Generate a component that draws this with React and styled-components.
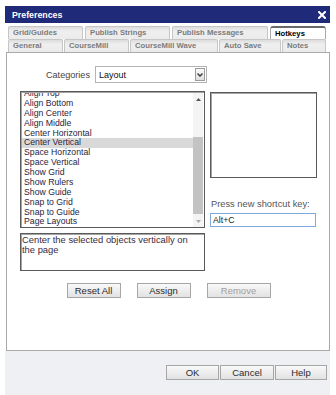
import React from "react";
import styled, { createGlobalStyle, css } from "styled-components";

const Global = createGlobalStyle`
  html, body { margin: 0; padding: 0; background: #fff; }
  body { font-family: "Liberation Sans", Arial, sans-serif; }
`;

const Window = styled.div`
  margin: 6px 0 0 5px;
  width: 325px;
  display: flex;
  flex-direction: column;
`;

const TitleBar = styled.div`
  height: 17px;
  box-sizing: border-box;
  background: #1f2a79;
  display: flex;
  align-items: center;
  justify-content: space-between;
  padding: 0 4px 0 7px;
  color: #fff;
  font-weight: bold;
  font-size: 8.8px;
`;

const TabStrip = styled.div`
  display: flex;
  flex-direction: column;
  padding: 3px 0 0 3px;
  background: #fff;
`;

const TabRow = styled.div`
  display: flex;
  gap: ${(p) => p.$gap}px;
  height: 13px;
`;

const Tab = styled.div`
  width: ${(p) => p.$w}px;
  height: 13px;
  box-sizing: border-box;
  border: 1px solid #c6c6c6;
  border-bottom: none;
  border-radius: 2px 2px 0 0;
  background: linear-gradient(#dcdcdc, #efefef 35%, #ebebeb);
  font-weight: bold;
  font-size: 7.7px;
  line-height: 12px;
  color: #7b7b7b;
  padding-left: 4px;
  white-space: nowrap;
  ${(p) =>
    p.$active &&
    css`
      background: #fff;
      color: #000;
      border-color: #a8a8a8;
      border-top: 2px solid #6a6a6a;
      border-radius: 3px 3px 0 0;
      line-height: 11px;
    `}
`;

const Panel = styled.div`
  margin-left: 1px;
  width: 324px;
  height: 299px;
  box-sizing: border-box;
  border: 1px solid #a9a9a9;
  background: #fff;
  display: flex;
  flex-direction: column;
  color: #333;
`;

const CategoryRow = styled.div`
  display: flex;
  align-items: center;
  margin-top: 13px;
  padding-left: 39px;
  gap: 5px;
  height: 17px;
`;

const Label = styled.span`
  font-size: ${(p) => p.$size || 9.1}px;
  color: #444;
`;

const Select = styled.div`
  width: 112px;
  height: 17px;
  box-sizing: border-box;
  border: 1px solid #b4b4b4;
  display: flex;
  align-items: center;
  justify-content: space-between;
  padding: 0 1px 0 3px;
  font-size: 9px;
  color: #111;
`;

const DropBtn = styled.div`
  width: 10px;
  height: 13px;
  box-sizing: border-box;
  border: 1px solid #9c9c9c;
  background: linear-gradient(#fafafa, #dedede);
  display: flex;
  align-items: center;
  justify-content: center;
`;

const Main = styled.div`
  display: flex;
  margin-top: 8px;
  padding-left: 13px;
  gap: 5px;
`;

const LeftCol = styled.div`
  width: 185px;
  display: flex;
  flex-direction: column;
  gap: 5px;
`;

const RightCol = styled.div`
  width: 107px;
  display: flex;
  flex-direction: column;
  padding-top: 1px;
`;

const ListBox = styled.div`
  height: 137px;
  box-sizing: border-box;
  border: 1px solid #5a5a5a;
  box-shadow: inset 1px 1px 0 #a4a4a4;
  display: flex;
  padding: 1px 1px 0 1px;
`;

const Items = styled.div`
  flex: 1;
  overflow: hidden;
`;

const ItemsInner = styled.div`
  margin-top: -4px;
`;

const Item = styled.div`
  height: 9.88px;
  line-height: 9.88px;
  font-size: 8.7px;
  padding-left: 2px;
  color: #2a2540;
  white-space: nowrap;
  ${(p) => p.$sel && css`background: #d9d9d9;`}
`;

const ScrollBar = styled.div`
  width: 10px;
  display: flex;
  flex-direction: column;
  background: #f4f4f4;
`;

const ScrollArrow = styled.div`
  height: 12px;
  display: flex;
  align-items: center;
  justify-content: center;
`;

const Track = styled.div`
  flex: 1;
  display: flex;
  flex-direction: column;
`;

const Thumb = styled.div`
  height: 77px;
  background: #c3c3c3;
`;

const DescBox = styled.div`
  height: 38px;
  box-sizing: border-box;
  border: 1px solid #5a5a5a;
  box-shadow: inset 1px 1px 0 #a4a4a4;
  padding: 1px 6px 0 1px;
  font-size: 9.4px;
  line-height: 10px;
  color: #3a2a40;
`;

const PreviewBox = styled.div`
  height: 86px;
  box-sizing: border-box;
  border: 1px solid #5a5a5a;
  box-shadow: inset 1px 1px 0 #a4a4a4;
`;

const KeyLabel = styled.div`
  margin-top: 21px;
  font-size: 9.3px;
  line-height: 10px;
  color: #555;
  padding-left: 1px;
  white-space: nowrap;
`;

const KeyInput = styled.div`
  margin-top: 4px;
  width: 106px;
  height: 14px;
  box-sizing: border-box;
  border: 1px solid #82a9df;
  font-size: 8.7px;
  line-height: 12px;
  padding-left: 2px;
  color: #222;
`;

const ButtonRow = styled.div`
  display: flex;
  justify-content: center;
  gap: 16px;
  margin-top: 12px;
  padding-left: 1px;
`;

const Button = styled.div`
  width: ${(p) => p.$w}px;
  height: 15px;
  box-sizing: border-box;
  border: 1px solid #a6a6a6;
  background: linear-gradient(#f9f9f9, #e2e2e2);
  display: flex;
  align-items: center;
  justify-content: center;
  font-size: 9.5px;
  color: ${(p) => (p.$disabled ? "#a0a0a0" : "#2a2a2a")};
`;

const Footer = styled.div`
  height: 36px;
  background: #eff0f4;
  border-bottom: 2px solid #7d7d7d;
  display: flex;
  justify-content: flex-end;
  align-items: flex-start;
  gap: 1px;
  padding: 14px 3px 0 0;
`;

const rowOne = [
  { t: "Grid/Guides", w: 75 },
  { t: "Publish Strings", w: 85 },
  { t: "Publish Messages", w: 96 },
  { t: "Hotkeys", w: 56, a: true },
];
const rowTwo = [
  { t: "General", w: 55 },
  { t: "CourseMill", w: 65 },
  { t: "CourseMill Wave", w: 88 },
  { t: "Auto Save", w: 62 },
  { t: "Notes", w: 44 },
];
const items = [
  "Align Top",
  "Align Bottom",
  "Align Center",
  "Align Middle",
  "Center Horizontal",
  "Center Vertical",
  "Space Horizontal",
  "Space Vertical",
  "Show Grid",
  "Show Rulers",
  "Show Guide",
  "Snap to Grid",
  "Snap to Guide",
  "Page Layouts",
];

export default function App() {
  const thumbOffset = 32;
  return (
    <>
      <Global />
      <Window>
        <TitleBar>
          <span>Preferences</span>
          <svg width="8" height="8" viewBox="0 0 8 8">
            <path d="M1 1L7 7M7 1L1 7" stroke="#fff" strokeWidth="2" strokeLinecap="square" />
          </svg>
        </TitleBar>
        <TabStrip>
          <TabRow $gap={2}>
            {rowOne.map((t) => (
              <Tab key={t.t} $w={t.w} $active={t.a}>
                {t.t}
              </Tab>
            ))}
          </TabRow>
          <TabRow $gap={1}>
            {rowTwo.map((t) => (
              <Tab key={t.t} $w={t.w}>
                {t.t}
              </Tab>
            ))}
          </TabRow>
        </TabStrip>
        <Panel>
          <CategoryRow>
            <Label>Categories</Label>
            <Select>
              <span>Layout</span>
              <DropBtn>
                <svg width="6" height="4" viewBox="0 0 6 4">
                  <path d="M0.5 0.5L3 3L5.5 0.5" stroke="#333" strokeWidth="1.3" fill="none" />
                </svg>
              </DropBtn>
            </Select>
          </CategoryRow>
          <Main>
            <LeftCol>
              <ListBox>
                <Items>
                  <ItemsInner>
                    {items.map((it) => (
                      <Item key={it} $sel={it === "Center Vertical"}>
                        {it}
                      </Item>
                    ))}
                  </ItemsInner>
                </Items>
                <ScrollBar>
                  <ScrollArrow>
                    <svg width="5" height="3" viewBox="0 0 5 3">
                      <path d="M0 3L2.5 0L5 3Z" fill="#555" />
                    </svg>
                  </ScrollArrow>
                  <Track>
                    <Thumb style={{ marginTop: thumbOffset }} />
                  </Track>
                  <ScrollArrow>
                    <svg width="5" height="3" viewBox="0 0 5 3">
                      <path d="M0 0L2.5 3L5 0Z" fill="#aaa" />
                    </svg>
                  </ScrollArrow>
                </ScrollBar>
              </ListBox>
              <DescBox>Center the selected objects vertically on the page</DescBox>
            </LeftCol>
            <RightCol>
              <PreviewBox />
              <KeyLabel>Press new shortcut key:</KeyLabel>
              <KeyInput>Alt+C</KeyInput>
            </RightCol>
          </Main>
          <ButtonRow>
            <Button $w={54}>Reset All</Button>
            <Button $w={54}>Assign</Button>
            <Button $w={64} $disabled>
              Remove
            </Button>
          </ButtonRow>
        </Panel>
        <Footer>
          <Button $w={53}>OK</Button>
          <Button $w={54}>Cancel</Button>
          <Button $w={52}>Help</Button>
        </Footer>
      </Window>
    </>
  );
}
